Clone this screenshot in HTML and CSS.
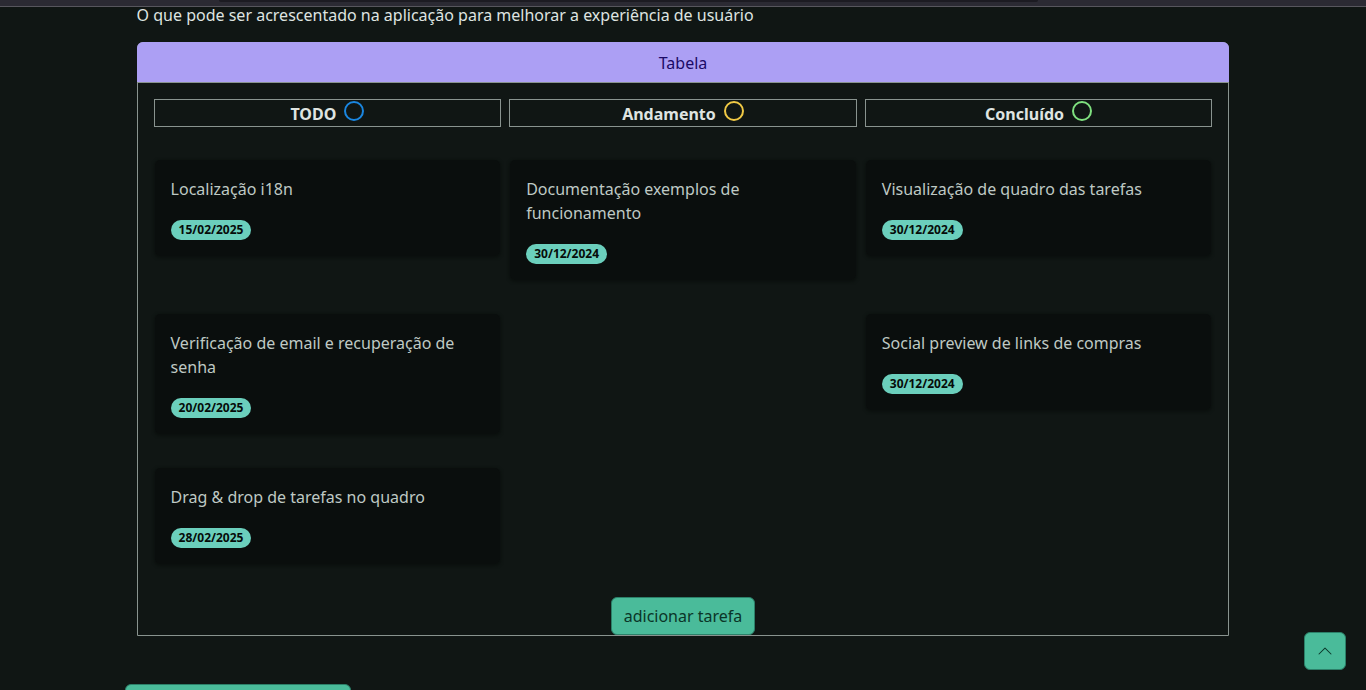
FILE: index.html
```html
<!DOCTYPE html>
<html lang="pt-BR">
<head>
<meta charset="utf-8">
<meta name="viewport" content="width=device-width, initial-scale=1">
<title>Tabela de tarefas</title>
<link rel="stylesheet" href="styles.css">
</head>
<body>
<div class="topbar"><div class="topbar-field"></div></div>
<main class="content">
  <p class="lead">O que pode ser acrescentado na aplicação para melhorar a experiência de usuário</p>
  <section class="board">
    <header class="board-title">Tabela</header>
    <div class="grid">
      <div class="column-head">TODO <span class="ring ring-blue"></span></div>
      <div class="column-head">Andamento <span class="ring ring-yellow"></span></div>
      <div class="column-head">Concluído <span class="ring ring-green"></span></div>

      <article class="card"><p class="card-text">Localização i18n</p><span class="badge">15/02/2025</span></article>
      <article class="card"><p class="card-text">Documentação exemplos de funcionamento</p><span class="badge">30/12/2024</span></article>
      <article class="card"><p class="card-text">Visualização de quadro das tarefas</p><span class="badge">30/12/2024</span></article>

      <article class="card"><p class="card-text">Verificação de email e recuperação de senha</p><span class="badge">20/02/2025</span></article>
      <div></div>
      <article class="card"><p class="card-text">Social preview de links de compras</p><span class="badge">30/12/2024</span></article>

      <article class="card"><p class="card-text">Drag &amp; drop de tarefas no quadro</p><span class="badge">28/02/2025</span></article>
    </div>
    <div class="board-actions"><button class="btn" type="button">adicionar tarefa</button></div>
  </section>
</main>
<footer class="footer"><button class="btn footer-btn" type="button" aria-label="Continuar"></button></footer>
<button class="btn to-top" type="button" aria-label="Voltar ao topo">
  <svg width="16" height="16" viewBox="0 0 16 16" fill="currentColor" aria-hidden="true"><path fill-rule="evenodd" d="M7.646 4.646a.5.5 0 0 1 .708 0l6 6a.5.5 0 0 1-.708.708L8 5.707l-5.646 5.647a.5.5 0 0 1-.708-.708z"/></svg>
</button>
</body>
</html>
```
FILE: styles.css
```css
* { box-sizing: border-box; }

body {
  margin: 0;
  height: 100vh;
  overflow: hidden;
  background: #101614;
  color: #dfe4e1;
  font: 16px/24px "Noto Sans", sans-serif;
}

p { margin: 0; }

.topbar {
  height: 7px;
  background: #2b2a33;
  border-bottom: 1px solid #57565d;
}

.topbar-field {
  width: 60%;
  height: 2px;
  margin-left: 16%;
  background: #1c1b22;
  border-radius: 0 0 4px 4px;
}

.content {
  width: 80%;
  margin: 0 auto;
}

.lead { margin: -4px 0 15px; }

.board {
  border: 1px solid #89938f;
  border-radius: 6px 6px 0 0;
}

.board-title {
  margin: -1px -1px 0;
  padding: 9px 16px 7px;
  text-align: center;
  background: #ac9ff4;
  color: #1b0a66;
  border-bottom: 1px solid #89938f;
  border-radius: 6px 6px 0 0;
}

.grid {
  display: grid;
  grid-template-columns: repeat(3, 1fr);
  gap: 32px 8px;
  padding: 16px 16px 32px;
  align-items: start;
}

.column-head {
  display: flex;
  justify-content: center;
  gap: 8px;
  height: 28px;
  padding-top: 2px;
  border: 1px solid #89938f;
  font-weight: 700;
}

.ring {
  width: 20px;
  height: 20px;
  margin-top: -1px;
  border: 2px solid;
  border-radius: 50%;
}

.ring-blue { color: #1a86e0; }
.ring-yellow { color: #f0c945; }
.ring-green { color: #7fe07f; }

.card {
  padding: 17px 16px 15px;
  background: #0a0e0d;
  background-clip: padding-box;
  border: 1px solid transparent;
  border-radius: 6px;
  box-shadow: 0 1px 3px #0b100e;
  color: #bfc9c4;
}

.card-text { margin-bottom: 19px; }

.badge {
  display: block;
  width: max-content;
  margin-bottom: 1px;
  padding: 0 8px;
  border-radius: 10px;
  background: #6bcfbc;
  color: #060b09;
  font-size: 12px;
  line-height: 20px;
  font-weight: 700;
}

.board-actions { text-align: center; }

.btn {
  padding: 6px 12px;
  background: #4abb9a;
  color: #0a3528;
  border: 1px solid #2c8069;
  border-radius: 6px;
  font: inherit;
}

.board-actions .btn { display: block; margin: 0 auto; }

.footer {
  margin-top: 48px;
  padding-left: 125px;
}

.footer-btn {
  display: block;
  width: 226px;
  height: 38px;
}

.to-top {
  position: fixed;
  right: 20px;
  bottom: 20px;
  display: flex;
  align-items: center;
  height: 38px;
}
```
